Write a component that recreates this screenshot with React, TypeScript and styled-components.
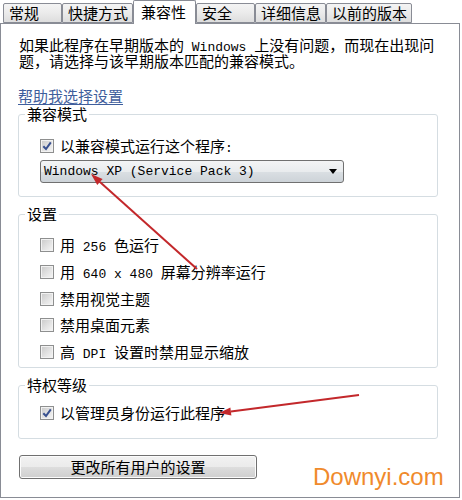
import React from "react";
import styled, { createGlobalStyle } from "styled-components";

const Global = createGlobalStyle`
  html, body { margin: 0; padding: 0; background: #ffffff; }
  body {
    font-family: "Noto Sans CJK SC", "Liberation Sans", sans-serif;
    font-size: 15px;
    color: #000;
  }
`;

const Root = styled.div`
  position: relative;
  width: 462px;
  height: 500px;
  overflow: hidden;
  background: #fff;
`;

const TabStrip = styled.div`
  display: flex;
  align-items: flex-end;
  height: 23px;
  padding-left: 3px;
`;

const Tab = styled.div<{ $active?: boolean }>`
  position: relative;
  box-sizing: border-box;
  min-width: ${(p) => (p.$active ? "63px" : "59px")};
  height: ${(p) => (p.$active ? "24px" : "20px")};
  margin-bottom: ${(p) => (p.$active ? "-1px" : "0")};
  z-index: ${(p) => (p.$active ? 2 : 1)};
  padding: ${(p) => (p.$active ? "0 8px 2px 7px" : "0 4px 0 5px")};
  border: 1px solid #898c95;
  border-bottom: ${(p) => (p.$active ? "none" : "1px solid #898c95")};
  border-radius: 2px 2px 0 0;
  background: ${(p) =>
    p.$active ? "#ffffff" : "linear-gradient(#f4f4f4 0%, #ebebeb 50%, #dddddd 100%)"};
  display: flex;
  align-items: center;
  line-height: 16px;
  white-space: nowrap;
`;

const Panel = styled.div`
  box-sizing: border-box;
  width: 460px;
  height: 475px;
  border: 1px solid #898c95;
  padding: 13px 21px 0 17px;
  display: flex;
  flex-direction: column;
  align-items: stretch;
`;

const Intro = styled.p`
  margin: 0 0 0 1px;
  line-height: 16px;
`;

const Latin = styled.span`
  font-family: "Liberation Mono", monospace;
  font-size: 13px;
  line-height: 0;
  white-space: pre;
`;

const HelpLink = styled.a`
  display: block;
  width: fit-content;
  margin-top: 19px;
  line-height: 16px;
  color: #3f5e9c;
  text-decoration: underline;
  text-underline-offset: 2px;
  cursor: pointer;
`;

const Group = styled.fieldset<{ $mt: number; $pt: number; $pb: number }>`
  margin: ${(p) => p.$mt}px 0 0 0;
  min-width: 0;
  border: 1px solid #d5dde2;
  border-radius: 3px;
  padding: ${(p) => p.$pt}px 0 ${(p) => p.$pb}px 6px;
`;

const Legend = styled.legend`
  padding: 0 2px;
  line-height: 16px;
`;

const GroupBody = styled.div<{ $gap: number }>`
  display: flex;
  flex-direction: column;
  gap: ${(p) => p.$gap}px;
  padding-left: 15px;
`;

const CheckRow = styled.label`
  display: flex;
  align-items: center;
  gap: 6px;
  height: 16px;
  line-height: 16px;
  white-space: nowrap;
`;

const Box = styled.span`
  box-sizing: border-box;
  width: 14px;
  height: 14px;
  flex: none;
  border: 1px solid #8e8f8f;
  background: linear-gradient(135deg, #c9c9c9 0%, #e3e3e3 55%, #f6f6f6 100%);
  box-shadow: inset 0 0 0 1px #f2f2f2;
  display: inline-flex;
  align-items: center;
  justify-content: center;
`;

const Select = styled.div`
  box-sizing: border-box;
  width: 304px;
  height: 23px;
  border: 1px solid #707070;
  border-radius: 3px;
  background: linear-gradient(#f3f4f5 0%, #e9ecee 50%, #dadfe3 51%, #cdd3d8 100%);
  display: flex;
  align-items: center;
  justify-content: space-between;
  padding: 0 6px 0 3px;
`;

const Caret = styled.span`
  width: 0;
  height: 0;
  border-left: 4px solid transparent;
  border-right: 4px solid transparent;
  border-top: 5px solid #000;
`;

const Button = styled.button`
  box-sizing: border-box;
  width: 238px;
  height: 24px;
  margin: 16px 0 0 1px;
  border: 1px solid #707070;
  border-radius: 3px;
  background: linear-gradient(#f2f2f2 0%, #ebebeb 50%, #dddddd 51%, #cfcfcf 100%);
  box-shadow: inset 0 0 0 1px #fcfcfc;
  font-family: "Noto Sans CJK SC", sans-serif;
  font-size: 15px;
  line-height: 16px;
  color: #000;
  padding: 0;
`;

const Watermark = styled.div`
  position: absolute;
  left: 313px;
  top: 465px;
  font-family: "Liberation Sans", Arial, sans-serif;
  font-size: 24px;
  line-height: 24px;
  color: #f08a2c;
`;

const Overlay = styled.svg`
  position: absolute;
  left: 0;
  top: 0;
  pointer-events: none;
`;

const Check: React.FC<{ checked?: boolean; children: React.ReactNode }> = ({ checked, children }) => (
  <CheckRow>
    <Box>
      {checked && (
        <svg width="10" height="10" viewBox="0 0 10 10">
          <path d="M1.3 5.2 L4 8 L8.8 1.3" fill="none" stroke="#38508f" strokeWidth="2" />
        </svg>
      )}
    </Box>
    <span>{children}</span>
  </CheckRow>
);

function Arrow({ x1, y1, x2, y2 }: { x1: number; y1: number; x2: number; y2: number }) {
  const dx = x2 - x1;
  const dy = y2 - y1;
  const len = Math.hypot(dx, dy);
  const ux = dx / len;
  const uy = dy / len;
  const hl = 12;
  const hw = 4;
  const bx = x2 - ux * hl;
  const by = y2 - uy * hl;
  const pts = `${x2},${y2} ${bx - uy * hw},${by + ux * hw} ${bx + uy * hw},${by - ux * hw}`;
  return (
    <g>
      <line x1={x1} y1={y1} x2={bx} y2={by} stroke="#c3282b" strokeWidth="2" />
      <polygon points={pts} fill="#c3282b" />
    </g>
  );
}

const tabs = ["常规", "快捷方式", "兼容性", "安全", "详细信息", "以前的版本"];

export default function App() {
  return (
    <Root>
      <Global />
      <TabStrip>
        {tabs.map((t) => (
          <Tab key={t} $active={t === "兼容性"}>
            {t}
          </Tab>
        ))}
      </TabStrip>
      <Panel>
        <Intro>
          如果此程序在早期版本的<Latin> Windows </Latin>上没有问题，而现在出现问
          <br />
          题，请选择与该早期版本匹配的兼容模式。
        </Intro>
        <HelpLink>帮助我选择设置</HelpLink>

        <Group $mt={2} $pt={16} $pb={13}>
          <Legend>兼容模式</Legend>
          <GroupBody $gap={6}>
            <Check checked>
              以兼容模式运行这个程序<Latin>:</Latin>
            </Check>
            <Select>
              <Latin>Windows XP (Service Pack 3)</Latin>
              <Caret />
            </Select>
          </GroupBody>
        </Group>

        <Group $mt={9} $pt={15} $pb={7}>
          <Legend>设置</Legend>
          <GroupBody $gap={10.75}>
            <Check>
              用<Latin> 256 </Latin>色运行
            </Check>
            <Check>
              用<Latin> 640 x 480 </Latin>屏幕分辨率运行
            </Check>
            <Check>禁用视觉主题</Check>
            <Check>禁用桌面元素</Check>
            <Check>
              高<Latin> DPI </Latin>设置时禁用显示缩放
            </Check>
          </GroupBody>
        </Group>

        <Group $mt={9} $pt={12} $pb={17}>
          <Legend>特权等级</Legend>
          <GroupBody $gap={0}>
            <Check checked>以管理员身份运行此程序</Check>
          </GroupBody>
        </Group>

        <Button>更改所有用户的设置</Button>
      </Panel>
      <Watermark>Downyi.com</Watermark>
      <Overlay width="462" height="500" viewBox="0 0 462 500">
        <Arrow x1={197} y1={269} x2={91} y2={174} />
        <Arrow x1={359} y1={395} x2={219} y2={413} />
      </Overlay>
    </Root>
  );
}
